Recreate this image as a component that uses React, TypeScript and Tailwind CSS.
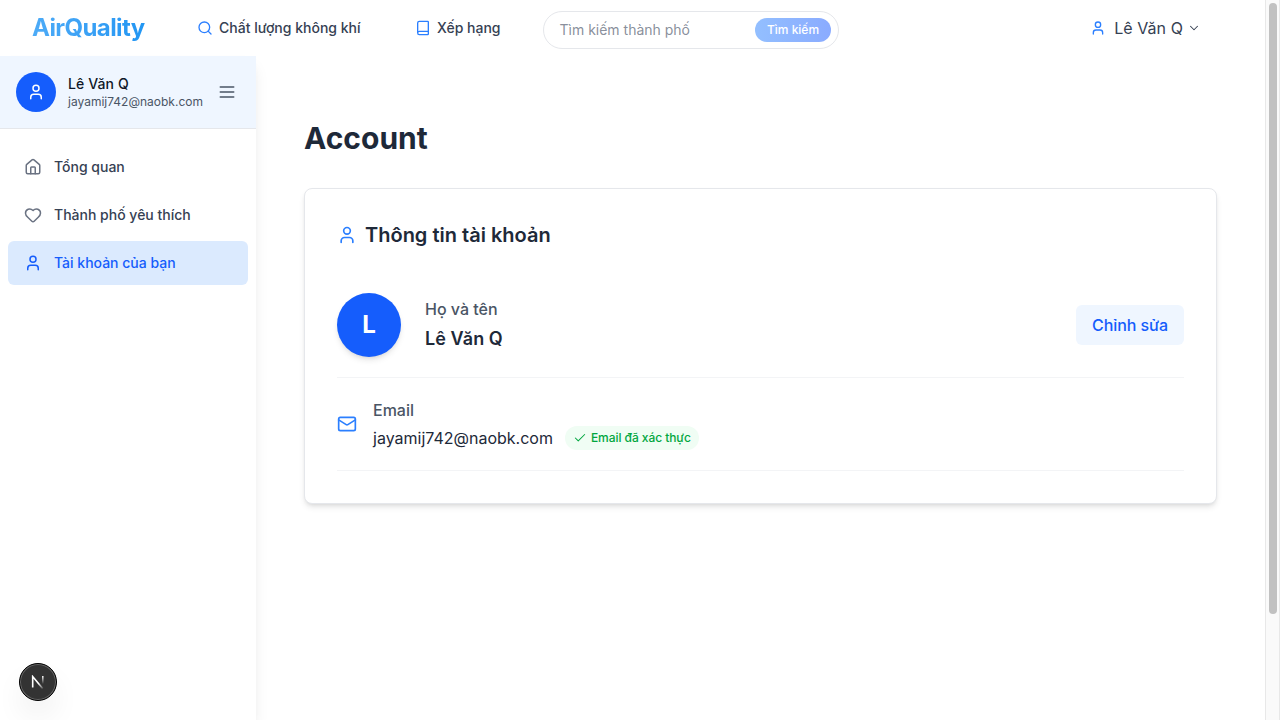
import React from "react";
import { Book, Check, ChevronDown, Heart, House, Mail, Search, User } from "lucide-react";

function MenuIcon() {
  return (
    <svg
      className="ml-auto text-gray-600"
      width="20"
      height="20"
      viewBox="0 0 24 24"
      fill="none"
      stroke="currentColor"
      strokeWidth="2"
      strokeLinecap="round"
    >
      <path d="M4 6h16M4 12h16M4 18h16" />
    </svg>
  );
}

function NavLink({ icon, label, active }: { icon: React.ReactNode; label: string; active?: boolean }) {
  return (
    <a
      className={
        active
          ? "flex h-11 items-center gap-3 rounded-md bg-blue-100 px-4 text-sm font-medium text-blue-600"
          : "flex h-11 items-center gap-3 rounded-md px-4 text-sm font-medium text-gray-700"
      }
    >
      <span className={active ? "text-blue-600" : "text-gray-500"}>{icon}</span>
      {label}
    </a>
  );
}

function Header() {
  return (
    <header className="flex h-14 shrink-0 items-center bg-white pl-8">
      <div className="w-[165px] bg-linear-to-r from-[#4dabf7] to-[#2196f3] bg-[length:113px_100%] bg-clip-text text-2xl font-bold tracking-tight text-transparent">
        AirQuality
      </div>
      <a className="flex w-[219px] items-center gap-1.5 text-sm font-medium text-gray-700">
        <Search size={16} className="text-blue-500" />
        Chất lượng không khí
      </a>
      <a className="flex w-[127px] items-center gap-1.5 text-sm font-medium text-gray-700">
        <Book size={16} className="-ml-px text-blue-500" />
        Xếp hạng
      </a>
      <div className="mt-1 flex h-[38px] w-[296px] items-center justify-between rounded-full border border-gray-200 pl-[15.5px] pr-[7px]">
        <span className="text-sm text-gray-500/80">Tìm kiếm thành phố</span>
        <button className="h-6 w-[76px] rounded-full bg-linear-to-r from-[#93bfff] to-[#8aabff] text-xs font-medium text-white">
          Tìm kiếm
        </button>
      </div>
      <div className="ml-auto flex items-center gap-2 pr-[64px] text-base text-gray-700">
        <User size={16} className="text-blue-500" />
        <span className="flex items-center gap-1 tracking-[0.004em]">
          Lê Văn Q
          <ChevronDown size={14} strokeWidth={1.8} />
        </span>
      </div>
    </header>
  );
}

function Sidebar() {
  return (
    <aside className="relative w-64 shrink-0 bg-white shadow-[0_10px_15px_-3px_rgba(0,0,0,0.1),0_4px_6px_-4px_rgba(0,0,0,0.1)]">
      <div className="flex h-[73px] items-center border-b border-gray-200 bg-blue-50 pl-4 pr-[19px]">
        <div className="flex size-10 items-center justify-center rounded-full bg-blue-600 text-white">
          <User size={18} />
        </div>
        <div className="ml-3">
          <p className="text-sm leading-[18px] font-medium tracking-[0.008em] text-gray-900">Lê Văn Q</p>
          <p className="relative top-px text-xs leading-4 text-gray-600">jayamij742@naobk.com</p>
        </div>
        <MenuIcon />
      </div>
      <nav className="flex flex-col gap-1 px-2 py-4">
        <NavLink icon={<House size={18} />} label="Tổng quan" />
        <NavLink icon={<Heart size={18} />} label="Thành phố yêu thích" />
        <NavLink icon={<User size={18} />} label="Tài khoản của bạn" active />
      </nav>
    </aside>
  );
}

function DevBadge() {
  return (
    <div className="absolute top-[663px] left-[19px] flex size-[38px] items-center justify-center rounded-full border border-black bg-[#333] shadow-[inset_0_0_0_1px_#666,0_16px_32px_-8px_rgba(0,0,0,0.16)]">
      <svg width="14" height="14" viewBox="0 0 14 14" fill="none">
        <defs>
          <linearGradient id="diag" x1="8" y1="8" x2="12.5" y2="14.5" gradientUnits="userSpaceOnUse">
            <stop stopColor="#fff" />
            <stop offset="1" stopColor="#fff" stopOpacity="0" />
          </linearGradient>
          <linearGradient id="stem" x1="11" y1="1" x2="11" y2="9" gradientUnits="userSpaceOnUse">
            <stop stopColor="#fff" />
            <stop offset="1" stopColor="#fff" stopOpacity="0" />
          </linearGradient>
        </defs>
        <path d="M1.7 12.6V1.6l10 12" stroke="url(#diag)" strokeWidth="1.6" />
        <path d="M11.8 1v8.5" stroke="url(#stem)" strokeWidth="1.5" />
      </svg>
    </div>
  );
}

function AccountCard() {
  return (
    <section className="mt-8 rounded-lg border border-gray-200 bg-white p-8 shadow-md">
      <h2 className="flex items-center gap-2 text-xl font-semibold text-gray-800">
        <User size={20} className="text-blue-500" />
        Thông tin tài khoản
      </h2>
      <div className="mt-6 flex items-center border-b border-gray-100 py-5">
        <div className="flex size-16 items-center justify-center rounded-full bg-blue-600 text-2xl font-bold text-white shadow-md">
          L
        </div>
        <div className="ml-6">
          <p className="text-base font-medium text-gray-600">Họ và tên</p>
          <p className="mt-1 text-lg leading-7 font-semibold tracking-[0.004em] text-gray-800">Lê Văn Q</p>
        </div>
        <button className="ml-auto h-10 w-[108px] rounded-md bg-blue-50 text-base font-medium tracking-[-0.005em] text-blue-600">
          Chỉnh sửa
        </button>
      </div>
      <div className="flex items-center gap-4 border-b border-gray-100 py-5">
        <Mail size={20} className="text-blue-500" />
        <div>
          <p className="text-base font-medium text-gray-600">Email</p>
          <div className="mt-1 flex h-6 items-center text-base text-gray-800">
            jayamij742@naobk.com
            <span className="ml-3 flex h-6 w-[134px] items-center gap-1 rounded-full bg-green-50 pl-2 text-xs font-medium tracking-[-0.005em] whitespace-nowrap text-green-600">
              <Check size={14} strokeWidth={1.75} className="shrink-0" />
              Email đã xác thực
            </span>
          </div>
        </div>
      </div>
    </section>
  );
}

export default function App() {
  return (
    <div className="relative flex h-[720px] w-[1280px] overflow-hidden bg-white font-['Inter','Liberation_Sans',sans-serif]">
      <div className="flex w-[1265px] flex-col">
        <Header />
        <div className="flex min-h-0 flex-1">
          <Sidebar />
          <main className="flex-1 px-12 pt-16">
            <h1 className="text-3xl font-bold text-gray-800">Account</h1>
            <AccountCard />
          </main>
        </div>
      </div>
      <div className="w-[15px] border-x border-[#e8e8e8] bg-[#fafafa] pt-[3px] pl-[3px]">
        <div className="h-[611px] w-2 rounded-full bg-[#c1c1c1]" />
      </div>
      <DevBadge />
    </div>
  );
}
